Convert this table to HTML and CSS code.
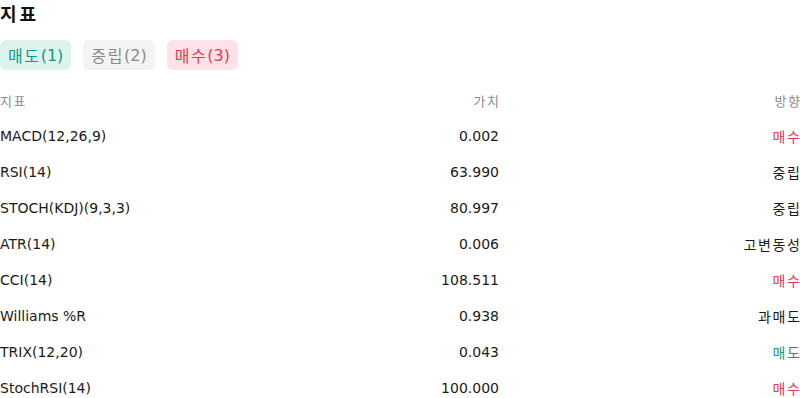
FILE: index.html
```html
<!DOCTYPE html>
<html lang="ko">
<head>
<meta charset="utf-8">
<link rel="stylesheet" href="styles.css">
</head>
<body>
<div class="panel">
  <h2 class="title"><span class="ko">지</span>표</h2>
  <div class="badges">
    <span class="badge sell"><span class="ko">매도</span>(1)</span>
    <span class="badge neutral"><span class="ko">중립</span>(2)</span>
    <span class="badge buy"><span class="ko">매수</span>(3)</span>
  </div>
  <div class="table">
    <div class="row head"><span><span class="ko">지</span>표</span><span class="num"><span class="ko">가</span>치</span><span class="dir"><span class="ko">방</span>향</span></div>
    <div class="row"><span>MACD(12,26,9)</span><span class="num">0.002</span><span class="dir buy-t"><span class="ko">매</span>수</span></div>
    <div class="row"><span>RSI(14)</span><span class="num">63.990</span><span class="dir"><span class="ko">중</span>립</span></div>
    <div class="row"><span>STOCH(KDJ)(9,3,3)</span><span class="num">80.997</span><span class="dir"><span class="ko">중</span>립</span></div>
    <div class="row"><span>ATR(14)</span><span class="num">0.006</span><span class="dir"><span class="ko">고변동</span>성</span></div>
    <div class="row"><span>CCI(14)</span><span class="num">108.511</span><span class="dir buy-t"><span class="ko">매</span>수</span></div>
    <div class="row"><span>Williams %R</span><span class="num">0.938</span><span class="dir"><span class="ko">과매</span>도</span></div>
    <div class="row"><span>TRIX(12,20)</span><span class="num">0.043</span><span class="dir sell-t"><span class="ko">매</span>도</span></div>
    <div class="row"><span>StochRSI(14)</span><span class="num">100.000</span><span class="dir buy-t"><span class="ko">매</span>수</span></div>
  </div>
</div>
</body>
</html>
```

FILE: styles.css
```css
* { box-sizing: border-box; }
html, body {
  margin: 0;
  padding: 0;
  background: #fff;
  font-family: "DejaVu Sans", "Noto Sans CJK KR", sans-serif;
  color: #1a1a1a;
}
.panel { width: 800px; }
.ko { letter-spacing: 0.12em; }
.title {
  margin: 0;
  font-size: 18px;
  font-weight: bold;
  line-height: 28px;
  padding-top: 1px;
  height: 28px;
  color: #111;
}
.title .ko { letter-spacing: 0.16em; }
.badges {
  display: flex;
  gap: 12px;
  margin-top: 12px;
}
.badge {
  display: inline-flex;
  align-items: center;
  height: 30px;
  padding: 0 8px;
  border-radius: 6px;
  font-size: 16px;
}
.badge .ko { letter-spacing: 0.1em; }
.badge.sell { background: #dff3ee; color: #0e9a80; }
.badge.neutral { background: #f3f3f3; color: #8a8a8a; }
.badge.buy { background: #fde3e7; color: #f0354c; }
.table { margin-top: 12px; }
.row {
  display: grid;
  grid-template-columns: 300px 199px 1fr;
  height: 36px;
  align-items: center;
  font-size: 14px;
  color: #1a1a1a;
}
.row.head { font-size: 13px; color: #8c8c8c; }
.num, .dir { text-align: right; }
.buy-t { color: #f0354c; }
.sell-t { color: #0e9a80; }
```
